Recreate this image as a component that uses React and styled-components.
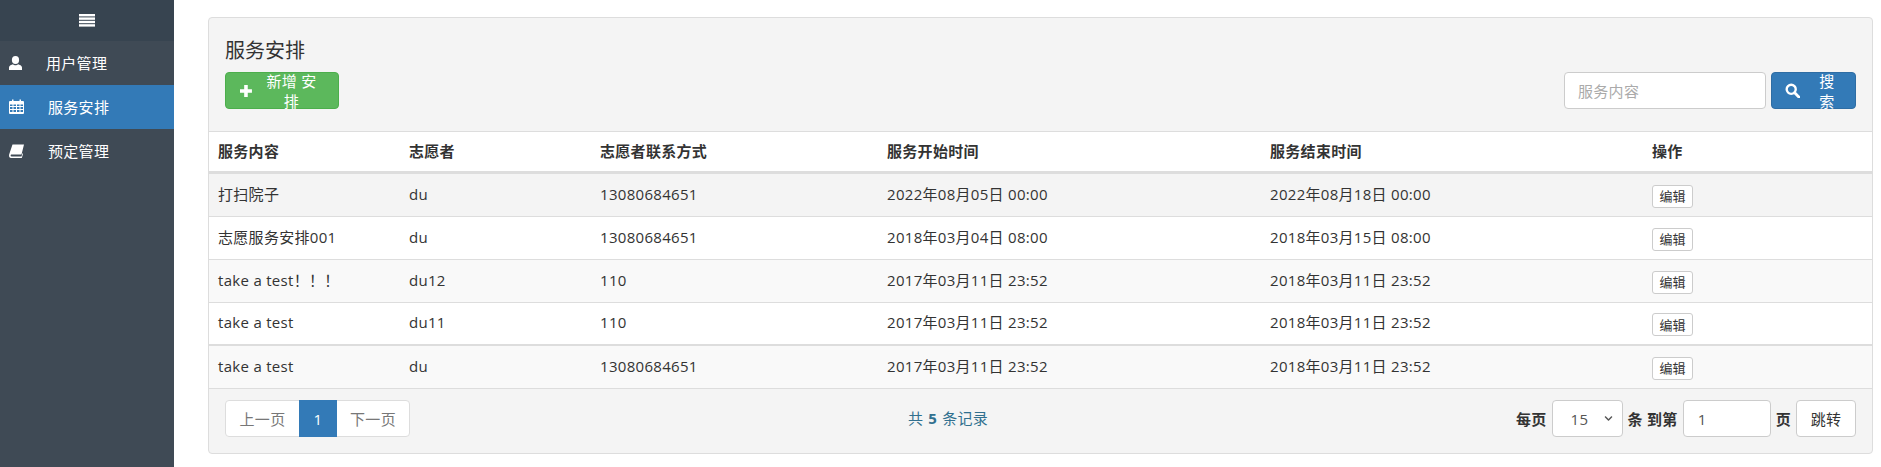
import React from "react";
import styled, { createGlobalStyle } from "styled-components";
import { FaChevronDown } from "react-icons/fa";

const Global = createGlobalStyle`
  html, body { margin: 0; padding: 0; background: #fff; }
  body {
    font-family: "Open Sans", "Noto Sans CJK SC", sans-serif;
    font-size: 15px; letter-spacing: .3px; line-height: 20px; color: #333; height: 467px; overflow: hidden;
  }
  * { box-sizing: border-box; }
`;

const Page = styled.div`display: flex; height: 467px;`;
const Sidebar = styled.aside`width: 174px; flex: none; background: #3f4a55; color: #fff;`;
const Toggle = styled.div`height: 41px; background: #374450; display: flex; align-items: center; justify-content: center; padding-bottom: 2px;`;
const NavItem = styled.div`
  height: 44px; display: flex; align-items: center; padding-left: 9px; padding-bottom: 1px;
  background: ${p => (p.$active ? "#337ab7" : "transparent")};
  color: #fff;
`;
const NavIcon = styled.span`width: ${p => p.$w}px; flex: none; display: flex; align-items: center;`;
const Main = styled.main`flex: 1; min-width: 0; padding: 17px 8px 13px 34px;`;
const Panel = styled.section`
  height: 437px; background: #f4f4f4; border: 1px solid #ddd; border-radius: 4px; overflow: hidden;
  display: flex; flex-direction: column;
`;
const Header = styled.div`height: 113px; flex: none; padding: 19px 16px 0 16px;`;
const Title = styled.h3`margin: 0 0 7px; font-size: 20px; letter-spacing: 0; font-weight: 400; line-height: 28px; height: 28px;`;
const Toolbar = styled.div`display: flex; justify-content: space-between; align-items: flex-start;`;
const Btn = styled.button`
  height: 37px; border: 1px solid ${p => p.$border}; background: ${p => p.$bg}; color: #fff;
  border-radius: 4px; font: inherit; letter-spacing: inherit; display: inline-flex; align-items: center; padding: 0 ${p => p.$pad}px; gap: ${p => p.$gap}px;
  width: ${p => p.$w}px;
`;
const SearchBox = styled.div`display: flex; gap: 5px;`;
const SearchInput = styled.input`
  width: 202px; height: 37px; border: 1px solid #ccc; border-radius: 4px; padding: 0 13px; font: inherit; letter-spacing: inherit; background: #fff; color: #555;
  &::placeholder { color: #aaa; opacity: 1; }
`;
const Table = styled.table`width: 100%; border-collapse: separate; border-spacing: 0; table-layout: fixed; flex: none;`;
const Th = styled.th`
  height: 43px; padding: 0 0 2px 9px; text-align: left; font-weight: 700; background: #fff;
  border-top: 1px solid #ddd; border-bottom: 3px solid #ddd;
`;
const Row = styled.tr`background: ${p => p.$bg};`;
const Td = styled.td`
  height: 43px; padding: 0 0 3px 9px; border-bottom: ${p => (p.$thick ? 2 : 1)}px solid #ddd; white-space: nowrap;
`;
const EditBtn = styled.button`
  height: 23px; width: 41px; padding: 0; margin-top: 5px; font: inherit; font-size: 13px; letter-spacing: 0; line-height: 18px; color: #333;
  background: #fff; border: 1px solid #ccc; border-radius: 3px; display: block;
`;
const Footer = styled.div`flex: 1; display: flex; align-items: flex-start; justify-content: space-between; padding: 11px 16px 0 16px;`;
const Pager = styled.div`display: flex; height: 37px; width: 185px; border: 1px solid #ddd; border-radius: 4px; background: #fff;`;
const PageLink = styled.span`
  display: flex; align-items: center; justify-content: center; color: ${p => (p.$on ? "#fff" : "#777")};
  background: ${p => (p.$on ? "#337ab7" : "transparent")}; width: ${p => p.$w}px; margin: ${p => (p.$on ? "-1px 0" : "0")};
`;
const Count = styled.div`color: #31708f; line-height: 37px; word-spacing: 3px; margin-right: 30px;`;
const CountNum = styled.b`margin: 0 5px;`;
const Controls = styled.div`display: flex; align-items: center; height: 37px; font-weight: 700;`;
const Label = styled.span`margin: ${p => p.$m};`;
const SelectBox = styled.div`
  width: 71px; height: 37px; border: 1px solid #ccc; border-radius: 4px; background: #fff; color: #555; font-weight: 400;
  display: flex; align-items: center; justify-content: space-between; padding: 0 9px 0 18px;
`;
const PageInput = styled.input`
  width: 88px; height: 37px; border: 1px solid #ccc; border-radius: 4px; font: inherit; letter-spacing: inherit; font-weight: 400; color: #555; padding: 0 14px; background: #fff;
`;
const JumpBtn = styled.button`
  width: 60px; height: 37px; border: 1px solid #ccc; border-radius: 4px; background: #fff; color: #333; font: inherit; letter-spacing: inherit; font-weight: 400; padding: 0;
`;

const Lines = () => (
  <svg width="16" height="14" viewBox="0 0 16 14" fill="#fff"><rect y="1" width="16" height="2.4"/><rect y="4.4" width="16" height="2.4"/><rect y="7.8" width="16" height="2.4"/><rect y="11.2" width="16" height="2.4"/></svg>
);
const User = () => (
  <svg width="13" height="14" viewBox="0 0 13 14" fill="#fff">
    <ellipse cx="6.500" cy="4" rx="3.600" ry="4"/>
    <path d="M0 14V11.500C0 9.500 2.500 8.800 4 8.200 5 9.500 8 9.500 9 8.200 10.500 8.800 13 9.500 13 11.500V14z"/>
  </svg>
);
const Cal = () => (
  <svg width="15" height="15" viewBox="0 0 15 15" fill="#fff">
    <path fillRule="evenodd" d="M1 2h2V.5h1.500V2h6V.5H12V2h2a1 1 0 0 1 1 1v11a1 1 0 0 1-1 1H1a1 1 0 0 1-1-1V3a1 1 0 0 1 1-1zM1 5.500V7h2.500V5.500zM4.500 5.500V7H7V5.500zM8 5.500V7h2.500V5.500zM11.500 5.500V7H14V5.500zM1 8V10h2.500V8zM4.500 8V10H7V8zM8 8V10h2.500V8zM11.500 8V10H14V8zM1 11v2h2.500v-2zM4.500 11v2H7v-2zM8 11v2h2.500v-2zM11.500 11v2H14v-2z"/>
  </svg>
);
const Book = () => (
  <svg width="15" height="14" viewBox="0 0 15 14" fill="#fff">
    <path d="M3.500 0.500H15L12.500 10.500H2.500C1.500 10.500 1.200 12.500 2.500 12.500H12.500L13.500 9 14 10 12.800 14H2C0 14-.3 11.500.3 10z"/>
  </svg>
);
const Plus = () => (
  <svg width="12" height="12" viewBox="0 0 12 12" fill="#fff"><path d="M4.200 0h3.600v4.200H12v3.600H7.800V12H4.200V7.800H0V4.200h4.200z"/></svg>
);
const Search = () => (
  <svg width="15" height="15" viewBox="0 0 15 15" fill="none" stroke="#fff"><circle cx="6.300" cy="6.300" r="4.600" strokeWidth="2.400"/><path d="M9.800 9.800L14 14" strokeWidth="2.900" strokeLinecap="round"/></svg>
);

const cols = [191, 191, 287, 383, 382, 230];
const heads = ["服务内容", "志愿者", "志愿者联系方式", "服务开始时间", "服务结束时间", "操作"];
const rows = [
  ["打扫院子", "du", "13080684651", "2022年08月05日 00:00", "2022年08月18日 00:00", "#f4f4f4"],
  ["志愿服务安排001", "du", "13080684651", "2018年03月04日 08:00", "2018年03月15日 08:00", "#fff"],
  ["take a test！！！", "du12", "110", "2017年03月11日 23:52", "2018年03月11日 23:52", "#f9f9f9"],
  ["take a test", "du11", "110", "2017年03月11日 23:52", "2018年03月11日 23:52", "#fff"],
  ["take a test", "du", "13080684651", "2017年03月11日 23:52", "2018年03月11日 23:52", "#f9f9f9"],
];

export default function App() {
  return (
    <Page>
      <Global />
      <Sidebar>
        <Toggle><Lines /></Toggle>
        <NavItem><NavIcon $w={37}><User /></NavIcon>用户管理</NavItem>
        <NavItem $active><NavIcon $w={39}><Cal /></NavIcon>服务安排</NavItem>
        <NavItem><NavIcon $w={39}><Book /></NavIcon>预定管理</NavItem>
      </Sidebar>
      <Main>
        <Panel>
          <Header>
            <Title>服务安排</Title>
            <Toolbar>
              <Btn $bg="#5cb85c" $border="#4cae4c" $pad={14} $gap={7} $w={114}><Plus />新增 安排</Btn>
              <SearchBox>
                <SearchInput placeholder="服务内容" />
                <Btn $bg="#337ab7" $border="#2e6da4" $pad={13} $gap={12} $w={85}><Search />搜索</Btn>
              </SearchBox>
            </Toolbar>
          </Header>
          <Table>
            <colgroup>{cols.map((c, i) => <col key={i} width={c} />)}</colgroup>
            <thead><tr>{heads.map(h => <Th key={h}>{h}</Th>)}</tr></thead>
            <tbody>
              {rows.map((r, i) => (
                <Row key={i} $bg={r[5]}>
                  {r.slice(0, 5).map((c, j) => <Td key={j} $thick={i === 3}>{c}</Td>)}
                  <Td $thick={i === 3}><EditBtn>编辑</EditBtn></Td>
                </Row>
              ))}
            </tbody>
          </Table>
          <Footer>
            <Pager>
              <PageLink $w={73}>上一页</PageLink>
              <PageLink $on $w={38}>1</PageLink>
              <PageLink $w={72}>下一页</PageLink>
            </Pager>
            <Count>共<CountNum>5</CountNum>条记录</Count>
            <Controls>
              <Label $m="0 5px 0 0">每页</Label>
              <SelectBox>15<FaChevronDown size={9} /></SelectBox>
              <Label $m="0 5px">条 到第</Label>
              <PageInput defaultValue="1" />
              <Label $m="0 5px">页</Label>
              <JumpBtn>跳转</JumpBtn>
            </Controls>
          </Footer>
        </Panel>
      </Main>
    </Page>
  );
}
